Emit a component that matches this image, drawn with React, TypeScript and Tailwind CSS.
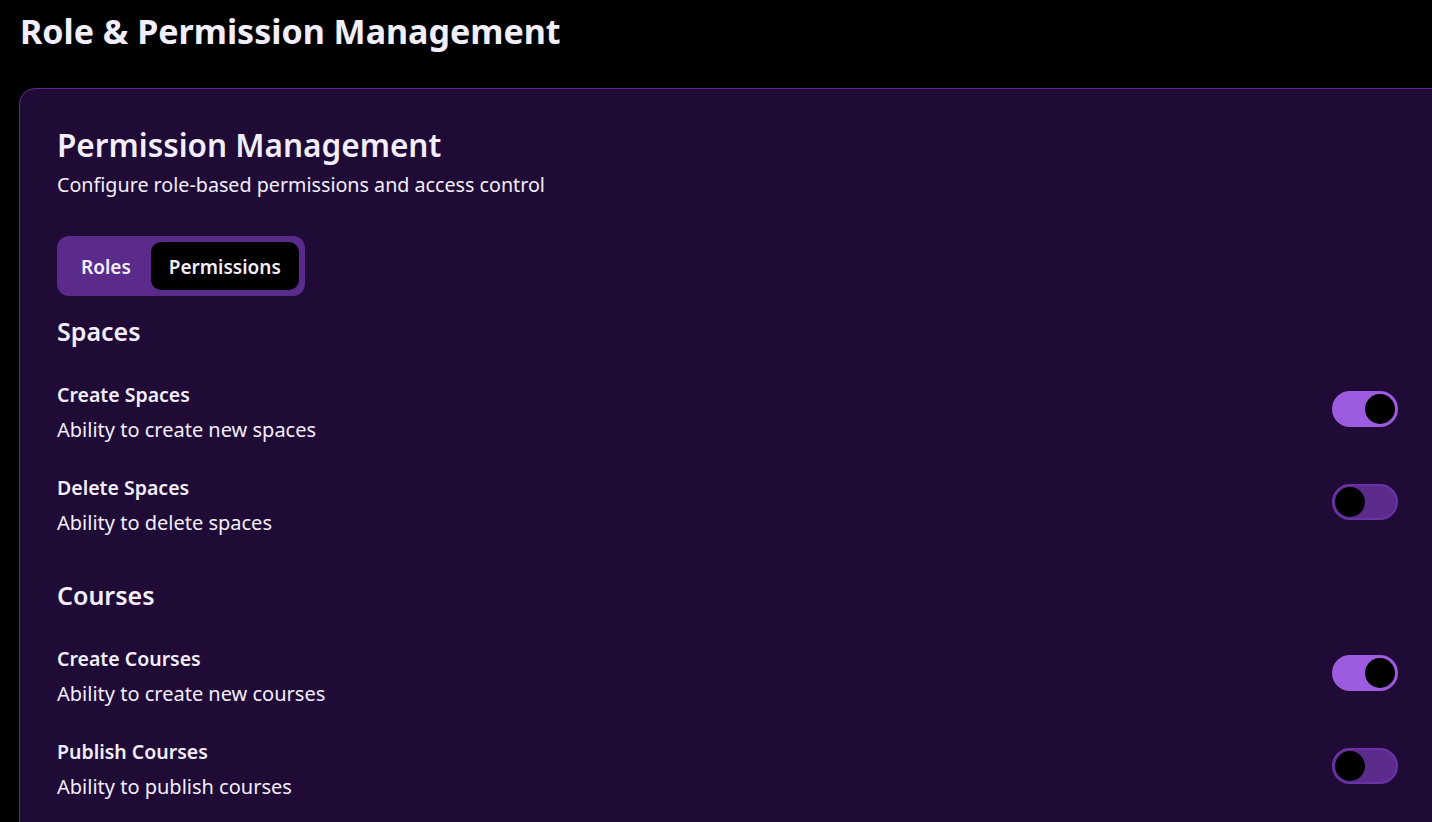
import { useState } from "react";

type Perm = { title: string; desc: string; on: boolean };

const groups: { name: string; items: Perm[] }[] = [
  {
    name: "Spaces",
    items: [
      { title: "Create Spaces", desc: "Ability to create new spaces", on: true },
      { title: "Delete Spaces", desc: "Ability to delete spaces", on: false },
    ],
  },
  {
    name: "Courses",
    items: [
      { title: "Create Courses", desc: "Ability to create new courses", on: true },
      { title: "Publish Courses", desc: "Ability to publish courses", on: false },
    ],
  },
];

function Toggle({ on }: { on: boolean }) {
  const [checked, setChecked] = useState(on);
  return (
    <button
      onClick={() => setChecked(!checked)}
      className={
        checked
          ? "mb-[8px] flex h-[36px] w-[66px] items-center justify-end rounded-full border-2 border-[#9d5ce0] bg-[#9d5ce0] px-[1px]"
          : "mb-[8px] flex h-[36px] w-[66px] items-center justify-start rounded-full border-2 border-[#6a34a8] bg-[#5b2b8c] px-[1px]"
      }
    >
      <span className="block h-[30px] w-[30px] rounded-full bg-black" />
    </button>
  );
}

export default function App() {
  return (
    <div className="min-h-screen overflow-hidden bg-black font-['Noto_Sans',sans-serif] text-[#f3eefc]">
      <h1 className="px-[20px] pt-[9px] text-[34px] font-bold leading-[44px]">Role &amp; Permission Management</h1>
      <div className="mt-[35px] ml-[19px] w-[1430px] rounded-[16px] border border-[#5a2b91] bg-[#1f0b36] pt-[32px] pl-[37px] pr-[50px] pb-10">
        <h2 className="text-[31.5px] font-semibold leading-[48px]">Permission Management</h2>
        <p className="mt-[2px] text-[19.7px] leading-[28px]">Configure role-based permissions and access control</p>
        <div className="mt-[37px] inline-flex h-[60px] items-center gap-[2px] rounded-[12px] bg-[#5b2b8c] p-[6px]">
          <button className="h-[48px] rounded-[10px] px-[18px] pt-[2px] text-[19px] font-semibold">Roles</button>
          <button className="h-[48px] rounded-[10px] bg-black px-[18px] pt-[2px] text-[19px] font-semibold">Permissions</button>
        </div>
        <div className="flex flex-col">
          {groups.map((g, i) => (
            <div key={g.name} className={i === 0 ? "mt-[17px] flex flex-col" : "mt-[40px] flex flex-col"}>
              <h3 className="text-[25px] font-semibold leading-[36px]">{g.name}</h3>
              <div className="mt-[32px] flex flex-col gap-[30px]">
                {g.items.map((p) => (
                  <div key={p.title} className="flex items-center justify-between">
                    <div className="flex flex-col">
                      <span className="text-[19.5px] font-semibold leading-[28px]">{p.title}</span>
                      <span className="mt-[7px] text-[20px] leading-[28px]">{p.desc}</span>
                    </div>
                    <Toggle on={p.on} />
                  </div>
                ))}
              </div>
            </div>
          ))}
        </div>
      </div>
    </div>
  );
}
